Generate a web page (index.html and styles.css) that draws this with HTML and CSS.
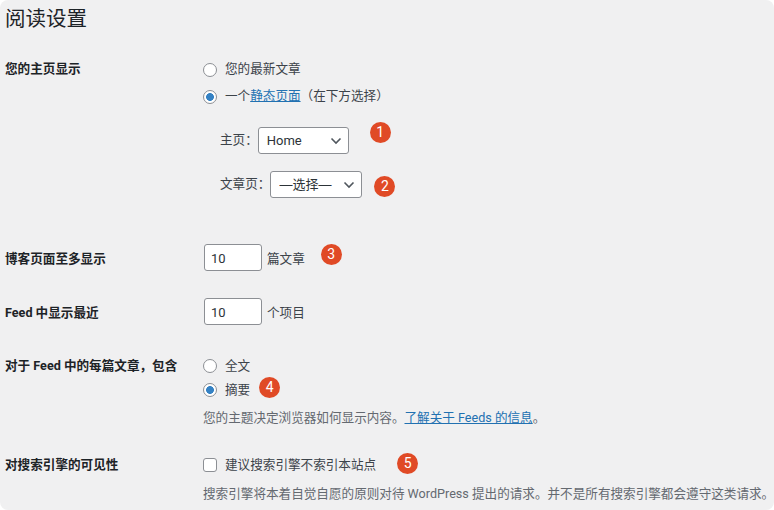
FILE: index.html
```html
<!DOCTYPE html>
<html lang="zh-CN">
<head>
    <meta charset="UTF-8">
    <meta name="viewport" content="width=device-width, initial-scale=1.0">
    <title>阅读设置</title>
    <link rel="stylesheet" href="styles.css">
</head>
<body>

    <div class="wrap">
        <h1>阅读设置</h1>

        <div class="row row-home">
            <div class="row-label">您的主页显示</div>
            <div class="row-field">
                <label class="choice"><input type="radio" name="front"> 您的最新文章</label>
                <label class="choice choice-second"><input type="radio" name="front" checked> 一个<a href="#">静态页面</a>（在下方选择）</label>
                <div class="page-select">
                    <label>主页：</label>
                    <select class="select-home"><option>Home</option></select>
                    <span class="badge">1</span>
                </div>
                <div class="page-select page-select-posts">
                    <label>文章页：</label>
                    <select class="select-posts"><option>—选择—</option></select>
                    <span class="badge">2</span>
                </div>
            </div>
        </div>

        <div class="row row-posts">
            <div class="row-label">博客页面至多显示</div>
            <div class="row-field number-field">
                <input type="text" value="10">
                <span class="unit">篇文章</span>
                <span class="badge">3</span>
            </div>
        </div>

        <div class="row row-feed">
            <div class="row-label">Feed 中显示最近</div>
            <div class="row-field number-field">
                <input type="text" value="10">
                <span class="unit">个项目</span>
            </div>
        </div>

        <div class="row row-excerpt">
            <div class="row-label">对于 Feed 中的每篇文章，包含</div>
            <div class="row-field">
                <label class="choice"><input type="radio" name="excerpt"> 全文</label>
                <label class="choice choice-tight"><input type="radio" name="excerpt" checked> 摘要<span class="badge">4</span></label>
                <p class="desc">您的主题决定浏览器如何显示内容。<a href="#">了解关于 Feeds 的信息</a>。</p>
            </div>
        </div>

        <div class="row row-search">
            <div class="row-label">对搜索引擎的可见性</div>
            <div class="row-field">
                <label class="choice"><input type="checkbox"> 建议搜索引擎不索引本站点<span class="badge">5</span></label>
                <p class="desc desc-search">搜索引擎将本着自觉自愿的原则对待 WordPress 提出的请求。并不是所有搜索引擎都会遵守这类请求。</p>
            </div>
        </div>
    </div>

</body>
</html>
```

FILE: styles.css
```css
html, body {
    margin: 0;
    background-color: #fff;
}

body {
    font-family: Roboto, "Noto Sans CJK SC", sans-serif;
    font-size: 12.6px;
    line-height: 18px;
    color: #3c434a;
}

.wrap {
    height: 510px;
    box-sizing: border-box;
    overflow: hidden;
    padding: 0 0 0 5px;
    background-color: #f0f0f1;
    border-radius: 8px;
}

h1 {
    margin: 0;
    padding-top: 4px;
    font-size: 20.5px;
    line-height: 30px;
    font-weight: 400;
    color: #1d2327;
}

.row {
    display: grid;
    grid-template-columns: 198px 1fr;
}

.row-label {
    font-weight: 700;
    color: #1d2327;
}

.row-home { margin-top: 27px; }
.row-posts { margin-top: 46px; }
.row-feed { margin-top: 27px; }
.row-excerpt { margin-top: 32px; }
.row-search { margin-top: 29px; }

.row-home .row-label { margin-top: -1px; }
.row-home .row-field { margin-top: -1px; }
.row-home .choice input { margin-top: 2px; }
.row-posts .row-label, .row-feed .row-label { padding-top: 6px; }

a {
    color: #2271b1;
    text-decoration: underline;
}

.choice {
    display: flex;
    align-items: center;
    white-space: nowrap;
    height: 18px;
}

.choice-second { margin-top: 9px; }
.choice-tight { margin-top: 6px; }

input[type="radio"], input[type="checkbox"] {
    appearance: none;
    box-sizing: border-box;
    width: 14px;
    height: 14px;
    margin: 0 8px 0 0;
    background-color: #fff;
    border: 1px solid #8c8f94;
    flex: none;
}

input[type="radio"] {
    border-radius: 50%;
}

input[type="checkbox"] {
    border-radius: 3px;
}

input[type="radio"]:checked {
    background: radial-gradient(circle, #3582c4 0 3.6px, #fff 4.2px);
}

.page-select {
    display: flex;
    align-items: center;
    margin: 22px 0 0 17px;
}

.page-select label {
    padding-bottom: 2px;
}

.page-select-posts {
    margin-top: 17px;
}

select {
    appearance: none;
    box-sizing: border-box;
    height: 27px;
    padding: 0 24px 0 8px;
    font-family: inherit;
    font-size: 13px;
    color: #2c3338;
    border: 1px solid #8c8f94;
    border-radius: 3px;
    background: #fff url('data:image/svg+xml;utf8,<svg xmlns="http://www.w3.org/2000/svg" width="12" height="8"><path d="M1.5 1.5l4.5 4.5 4.5-4.5" fill="none" stroke="%2350575e" stroke-width="1.6"/></svg>') no-repeat right 6px center;
}

.select-home { width: 91px; }
.select-posts { width: 92px; font-family: "Liberation Sans", "Noto Sans CJK SC", sans-serif; }

.number-field {
    display: flex;
    align-items: center;
    gap: 5px;
}

.number-field input {
    box-sizing: border-box;
    width: 58px;
    height: 27px;
    margin-left: 1px;
    padding: 1px 6px 0;
    font-family: inherit;
    font-size: 13px;
    color: #2c3338;
    background-color: #fff;
    border: 1px solid #8c8f94;
    border-radius: 3px;
}

.unit {
    padding-top: 2px;
}

.desc {
    margin: 10px 0 0;
    color: #646970;
    white-space: nowrap;
}

.desc-search {
    margin-top: 11px;
}

.badge {
    position: relative;
    width: 21px;
    height: 21px;
    border-radius: 50%;
    background-color: #e04a26;
    color: #fff;
    font-size: 14px;
    line-height: 21px;
    text-align: center;
}

.page-select .badge { margin-left: 21px; top: -8px; }
.page-select-posts .badge { margin-left: 12px; top: 2px; }
.number-field .badge { margin-left: 11px; top: -3px; }
.choice-tight .badge { margin-left: 9px; top: -3px; }
.row-search .badge { margin-left: 21px; top: -2px; }
```
